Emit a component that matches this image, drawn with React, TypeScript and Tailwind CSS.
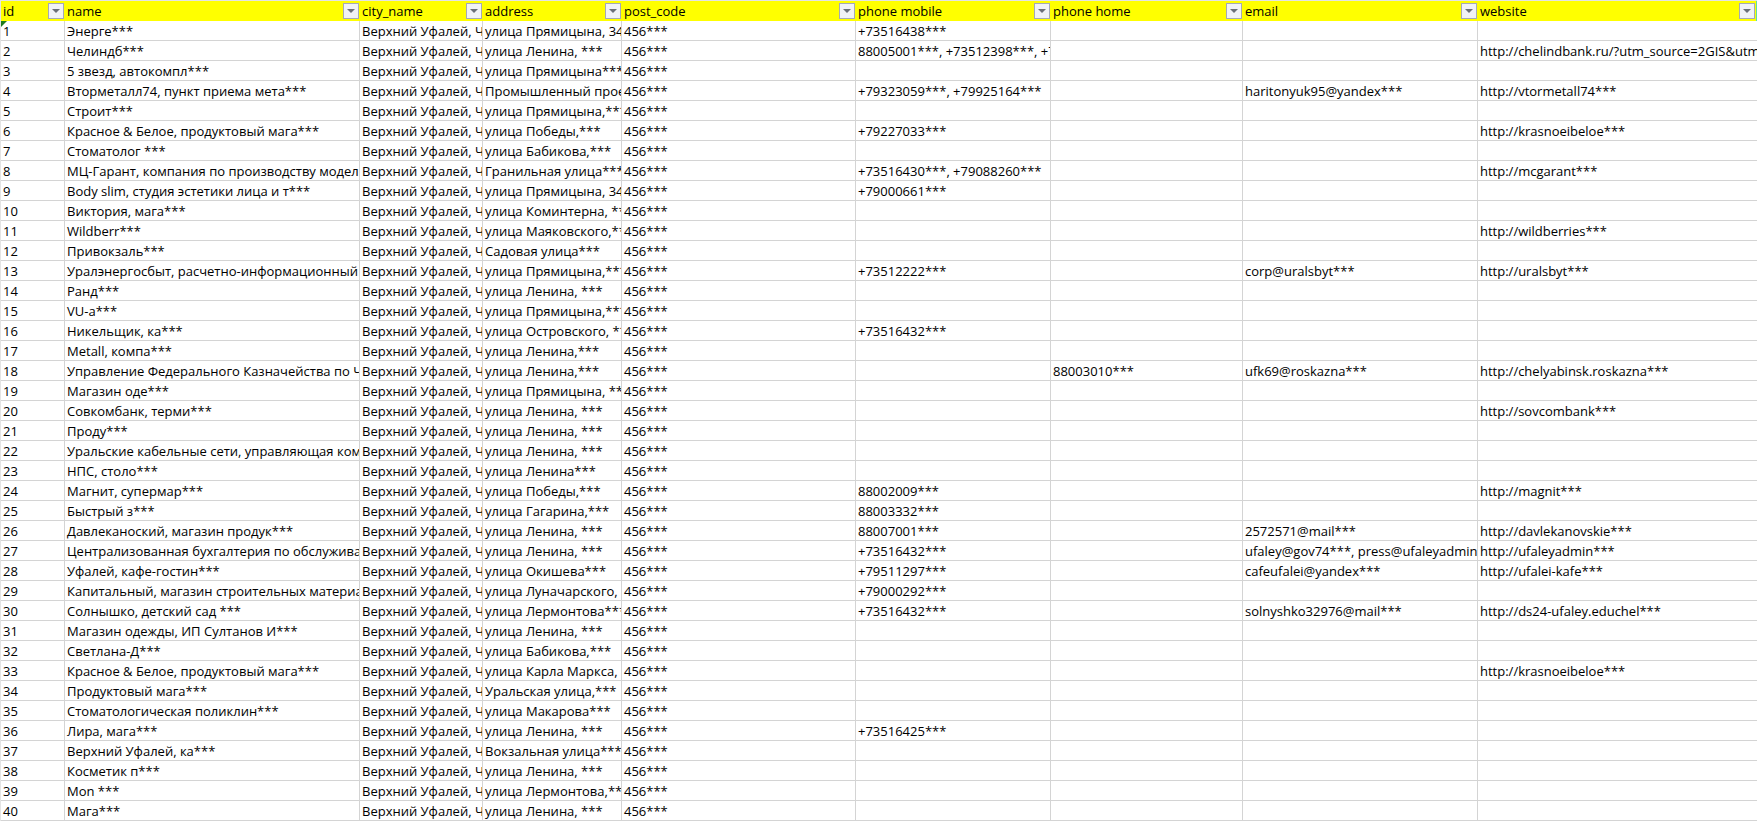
const columns = [
  { key: 'id', width: 'w-[64px]' },
  { key: 'name', width: 'w-[295px]' },
  { key: 'city_name', width: 'w-[123px]' },
  { key: 'address', width: 'w-[139px]' },
  { key: 'post_code', width: 'w-[234px]' },
  { key: 'phone mobile', width: 'w-[195px]' },
  { key: 'phone home', width: 'w-[192px]' },
  { key: 'email', width: 'w-[235px]' },
  { key: 'website', width: 'w-[278px]' },
]

type Row = [string, string, string?, string?, string?, string?]

const city = 'Верхний Уфалей, Челябинская'
const lenin = 'улица Ленина, ***'

const rows: Row[] = [
  ['Энерге***', 'улица Прямицына, 34***', '+73516438***'],
  ['Челиндб***', lenin, '88005001***, +73512398***, +73512398***', '', '', 'http://chelindbank.ru/?utm_source=2GIS&utm_medium=***'],
  ['5 звезд, автокомпл***', 'улица Прямицына***'],
  ['Вторметалл74, пункт приема мета***', 'Промышленный проезд***', '+79323059***, +79925164***', '', 'haritonyuk95@yandex***', 'http://vtormetall74***'],
  ['Строит***', 'улица Прямицына,***'],
  ['Красное & Белое, продуктовый мага***', 'улица Победы,***', '+79227033***', '', '', 'http://krasnoeibeloe***'],
  ['Стоматолог ***', 'улица Бабикова,***'],
  ['МЦ-Гарант, компания по производству моделей***', 'Гранильная улица***', '+73516430***, +79088260***', '', '', 'http://mcgarant***'],
  ['Body slim, студия эстетики лица и т***', 'улица Прямицына, 34***', '+79000661***'],
  ['Виктория, мага***', 'улица Коминтерна, ***'],
  ['Wildberr***', 'улица Маяковского,***', '', '', '', 'http://wildberries***'],
  ['Привокзаль***', 'Садовая улица***'],
  ['Уралэнергосбыт, расчетно-информационный центр***', 'улица Прямицына,***', '+73512222***', '', 'corp@uralsbyt***', 'http://uralsbyt***'],
  ['Ранд***', lenin],
  ['VU-a***', 'улица Прямицына,***'],
  ['Никельщик, ка***', 'улица Островского, ***', '+73516432***'],
  ['Metall, компа***', 'улица Ленина,***'],
  ['Управление Федерального Казначейства по Челябинской***', 'улица Ленина,***', '', '88003010***', 'ufk69@roskazna***', 'http://chelyabinsk.roskazna***'],
  ['Магазин оде***', 'улица Прямицына, ***'],
  ['Совкомбанк, терми***', lenin, '', '', '', 'http://sovcombank***'],
  ['Проду***', lenin],
  ['Уральские кабельные сети, управляющая компания***', lenin],
  ['НПС, столо***', 'улица Ленина***'],
  ['Магнит, супермар***', 'улица Победы,***', '88002009***', '', '', 'http://magnit***'],
  ['Быстрый з***', 'улица Гагарина,***', '88003332***'],
  ['Давлеканоский, магазин продук***', lenin, '88007001***', '', '2572571@mail***', 'http://davlekanovskie***'],
  ['Централизованная бухгалтерия по обслуживанию***', lenin, '+73516432***', '', 'ufaley@gov74***, press@ufaleyadmin***', 'http://ufaleyadmin***'],
  ['Уфалей, кафе-гостин***', 'улица Окишева***', '+79511297***', '', 'cafeufalei@yandex***', 'http://ufalei-kafe***'],
  ['Капитальный, магазин строительных материалов***', 'улица Луначарского, ***', '+79000292***'],
  ['Солнышко, детский сад ***', 'улица Лермонтова***', '+73516432***', '', 'solnyshko32976@mail***', 'http://ds24-ufaley.educhel***'],
  ['Магазин одежды, ИП Султанов И***', lenin],
  ['Светлана-Д***', 'улица Бабикова,***'],
  ['Красное & Белое, продуктовый мага***', 'улица Карла Маркса, ***', '', '', '', 'http://krasnoeibeloe***'],
  ['Продуктовый мага***', 'Уральская улица,***'],
  ['Стоматологическая поликлин***', 'улица Макарова***'],
  ['Лира, мага***', lenin, '+73516425***'],
  ['Верхний Уфалей, ка***', 'Вокзальная улица***'],
  ['Косметик п***', lenin],
  ['Mon ***', 'улица Лермонтова,***'],
  ['Мага***', lenin],
]

function FilterButton() {
  return (
    <span className="absolute right-[1px] top-[2px] flex h-[16px] w-[16px] items-center justify-center border border-[#a4a9b8] bg-[#f1f2f6]">
      <svg width="8" height="4" viewBox="0 0 8 4">
        <path d="M0 0h8L4 4z" fill="#6b6f78" />
      </svg>
    </span>
  )
}

function Cell({ width, value }: { width: string; value?: string }) {
  return (
    <div className={`${width} h-full shrink-0 overflow-hidden whitespace-nowrap border-r border-[#d4d4d4] px-[2px] leading-[20px]`}>
      {value}
    </div>
  )
}

export default function App() {
  return (
    <div className="h-[821px] w-[1757px] overflow-hidden border-l border-t border-[#e4e4e4] bg-white font-['Open_Sans','Liberation_Sans',sans-serif] text-[13px] text-black">
      <div className="flex h-[20px] bg-[#ffff00]">
        {columns.map((col) => (
          <div key={col.key} className={`${col.width} relative shrink-0 px-[2px] leading-[20px]`}>
            {col.key}
            <FilterButton />
          </div>
        ))}
        <div className="w-[1px] bg-[#5fe0a0]" />
      </div>
      {rows.map((row, i) => (
        <div key={i} className="relative flex h-[20px] border-b border-[#d4d4d4]">
          {i === 0 && <span className="absolute left-0 top-0 h-0 w-0 border-r-[6px] border-t-[6px] border-r-transparent border-t-[#1f7a1f]" />}
          <Cell width={columns[0].width} value={String(i + 1)} />
          <Cell width={columns[1].width} value={row[0]} />
          <Cell width={columns[2].width} value={city} />
          <Cell width={columns[3].width} value={row[1]} />
          <Cell width={columns[4].width} value="456***" />
          <Cell width={columns[5].width} value={row[2]} />
          <Cell width={columns[6].width} value={row[3]} />
          <Cell width={columns[7].width} value={row[4]} />
          <Cell width="w-[280px]" value={row[5]} />
        </div>
      ))}
    </div>
  )
}
